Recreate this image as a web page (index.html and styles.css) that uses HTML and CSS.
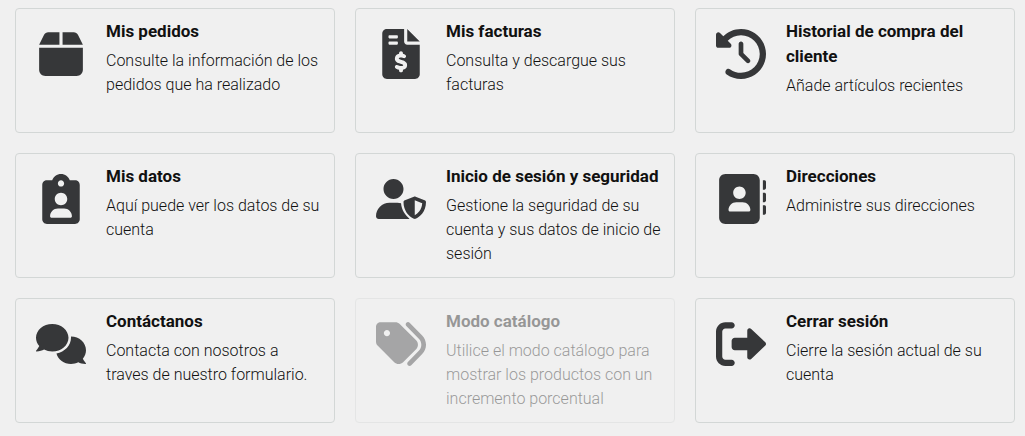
FILE: index.html
```html
<!DOCTYPE html>
<html lang="es">
	<head>
		<meta charset="UTF-8" />
		<meta name="viewport" content="width=device-width, initial-scale=1.0" />
		<title>Mi cuenta</title>
		<link rel="stylesheet" href="styles.css">
	</head>
	<body>
		<main class="account-grid">
			<a class="card" href="#pedidos">
				<svg class="card-icon" viewBox="0 0 448 512" aria-hidden="true"><path d="M50.73 58.53C58.86 42.27 75.48 32 93.67 32H208V160H0L50.73 58.53zM240 160V32H354.3C372.5 32 389.1 42.27 397.3 58.53L448 160H240zM448 416C448 451.3 419.3 480 384 480H64C28.65 480 0 451.3 0 416V192H448V416z"/></svg>
				<div class="card-body">
					<h2 class="card-title">Mis pedidos</h2>
					<p class="card-text">Consulte la información de los pedidos que ha realizado</p>
				</div>
			</a>

			<a class="card" href="#facturas">
				<svg class="card-icon" viewBox="0 0 384 512" aria-hidden="true"><path fill-rule="evenodd" d="M384 128h-128V0L384 128zM256 160H384v304c0 26.51-21.49 48-48 48h-288C21.49 512 0 490.5 0 464v-416C0 21.49 21.49 0 48 0H224l.0039 128C224 145.7 238.3 160 256 160zM64 88C64 92.38 67.63 96 72 96h80C156.4 96 160 92.38 160 88v-16C160 67.63 156.4 64 152 64h-80C67.63 64 64 67.63 64 72V88zM72 160h80C156.4 160 160 156.4 160 152v-16C160 131.6 156.4 128 152 128h-80C67.63 128 64 131.6 64 136v16C64 156.4 67.63 160 72 160zM197.5 316.8L191.1 315.2C168.3 308.2 168.8 304.1 169.6 300.5c1.375-7.812 16.59-9.719 30.27-7.625c5.594 .8438 11.73 2.812 17.59 4.844c10.39 3.594 21.83-1.938 25.45-12.34c3.625-10.44-1.891-21.84-12.33-25.47c-7.219-2.484-13.11-4.078-18.56-5.273V248c0-11.03-8.953-20-20-20s-20 8.969-20 20v5.992C149.6 258.8 133.8 272.8 130.2 293.7c-7.406 42.84 33.19 54.75 50.52 59.84l5.812 1.688c29.28 8.375 28.8 11.19 27.92 16.28c-1.375 7.812-16.59 9.75-30.31 7.625c-6.938-1.031-15.81-4.219-23.66-7.031l-4.469-1.625c-10.41-3.594-21.83 1.812-25.52 12.22c-3.672 10.41 1.781 21.84 12.2 25.53l4.266 1.5c7.758 2.789 16.38 5.59 25.06 7.512V424c0 11.03 8.953 20 20 20s20-8.969 20-20v-6.254c22.36-4.793 38.21-18.53 41.83-39.43C261.3 335 219.8 323.1 197.5 316.8z"/></svg>
				<div class="card-body">
					<h2 class="card-title">Mis facturas</h2>
					<p class="card-text">Consulta y descargue sus facturas</p>
				</div>
			</a>

			<a class="card" href="#historial">
				<svg class="card-icon" viewBox="0 0 512 512" aria-hidden="true"><path d="M256 0C397.4 0 512 114.6 512 256C512 397.4 397.4 512 256 512C201.7 512 151.2 495 109.7 466.1C95.2 455.1 91.64 436 101.8 421.5C111.9 407 131.8 403.5 146.3 413.6C177.4 435.3 215.2 448 256 448C362 448 448 362 448 256C448 149.1 362 64 256 64C202.1 64 155 85.46 120.2 120.2L151 151C166.1 166.1 155.4 192 134.1 192H24C10.75 192 0 181.3 0 168V57.94C0 36.56 25.85 25.85 40.97 40.97L74.98 74.98C121.3 28.69 185.3 0 255.1 0L256 0zM256 128C269.3 128 280 138.7 280 152V246.1L344.1 311C354.3 320.4 354.3 335.6 344.1 344.1C335.6 354.3 320.4 354.3 311 344.1L239 272.1C234.5 268.5 232 262.4 232 256V152C232 138.7 242.7 128 256 128V128z"/></svg>
				<div class="card-body">
					<h2 class="card-title">Historial de compra del cliente</h2>
					<p class="card-text">Añade artículos recientes</p>
				</div>
			</a>

			<a class="card" href="#datos">
				<svg class="card-icon" viewBox="0 0 384 512" aria-hidden="true"><path fill-rule="evenodd" d="M336 64h-53.88C268.9 26.8 233.7 0 192 0S115.1 26.8 101.9 64H48C21.5 64 0 85.48 0 112v352C0 490.5 21.5 512 48 512h288c26.5 0 48-21.48 48-48v-352C384 85.48 362.5 64 336 64zM192 64c17.67 0 32 14.33 32 32s-14.33 32-32 32S160 113.7 160 96S174.3 64 192 64zM192 192c35.35 0 64 28.65 64 64s-28.65 64-64 64S128 291.3 128 256S156.7 192 192 192zM288 448H96c-8.836 0-16-7.164-16-16C80 387.8 115.8 352 160 352h64c44.18 0 80 35.82 80 80C304 440.8 296.8 448 288 448z"/></svg>
				<div class="card-body">
					<h2 class="card-title">Mis datos</h2>
					<p class="card-text">Aquí puede ver los datos de su cuenta</p>
				</div>
			</a>

			<a class="card" href="#seguridad">
				<svg class="card-icon" viewBox="0 0 640 512" aria-hidden="true"><path fill-rule="evenodd" d="M622.3 271.1l-115.1-45.01c-4.125-1.629-12.62-3.754-22.25 0L369.8 271.1C359 275.2 352 285.1 352 295.1c0 111.6 68.75 188.8 132.9 213.9c9.625 3.75 18 1.625 22.25 0C558.4 489.9 640 420.5 640 295.1C640 285.1 633 275.2 622.3 271.1zM496 462.4V273.2l95.5 37.38C585.9 397.8 530.6 446 496 462.4zM224 256c70.7 0 128-57.31 128-128S294.7 0 224 0C153.3 0 96 57.31 96 128S153.3 256 224 256zM320.6 310.3C305.9 306.3 290.6 304 274.7 304H173.3C77.61 304 0 381.7 0 477.4C0 496.5 15.52 512 34.66 512H413.3c5.727 0 10.9-1.727 15.66-4.188C375.1 464.7 327.1 396 320.6 310.3z"/></svg>
				<div class="card-body">
					<h2 class="card-title">Inicio de sesión y seguridad</h2>
					<p class="card-text">Gestione la seguridad de su cuenta y sus datos de inicio de sesión</p>
				</div>
			</a>

			<a class="card" href="#direcciones">
				<svg class="card-icon" viewBox="0 0 512 512" aria-hidden="true"><path fill-rule="evenodd" d="M384 0H96C60.65 0 32 28.65 32 64v384c0 35.35 28.65 64 64 64h288c35.35 0 64-28.65 64-64V64C448 28.65 419.3 0 384 0zM240 128c35.35 0 64 28.65 64 64s-28.65 64-64 64c-35.34 0-64-28.65-64-64S204.7 128 240 128zM336 384h-192C135.2 384 128 376.8 128 368C128 323.8 163.8 288 208 288h64c44.18 0 80 35.82 80 80C352 376.8 344.8 384 336 384zM496 64H480v96h16C504.8 160 512 152.8 512 144v-64C512 71.16 504.8 64 496 64zM496 192H480v96h16C504.8 288 512 280.8 512 272v-64C512 199.2 504.8 192 496 192zM496 320H480v96h16c8.836 0 16-7.164 16-16v-64C512 327.2 504.8 320 496 320z"/></svg>
				<div class="card-body">
					<h2 class="card-title">Direcciones</h2>
					<p class="card-text">Administre sus direcciones</p>
				</div>
			</a>

			<a class="card" href="#contacto">
				<svg class="card-icon" viewBox="0 0 640 512" aria-hidden="true"><path d="M416 176C416 78.8 322.9 0 208 0S0 78.8 0 176c0 39.57 15.62 75.96 41.67 105.4c-16.39 32.76-39.23 57.32-39.59 57.68c-2.1 2.205-2.67 5.475-1.441 8.354C1.9 350.3 4.602 352 7.66 352c38.35 0 70.76-11.12 95.74-24.04C134.2 343.1 169.8 352 208 352C322.9 352 416 273.2 416 176zM599.6 443.7C624.8 413.9 640 376.6 640 336C640 238.8 554 160 448 160c-.3145 0-.6191 .041-.9336 .043C447.5 165.3 448 170.6 448 176c0 98.62-79.68 181.2-186.1 202.5C282.7 455.1 357.1 512 448 512c33.69 0 65.32-8.008 92.85-21.98C565.2 502 596.1 512 632.3 512c3.059 0 5.76-1.725 7.02-4.605c1.229-2.879 .6582-6.148-1.441-8.354C637.6 498.7 615.9 475.3 599.6 443.7z"/></svg>
				<div class="card-body">
					<h2 class="card-title">Contáctanos</h2>
					<p class="card-text">Contacta con nosotros a traves de nuestro formulario.</p>
				</div>
			</a>

			<a class="card card-disabled" href="#catalogo" aria-disabled="true">
				<svg class="card-icon" viewBox="0 0 512 512" aria-hidden="true"><path fill-rule="evenodd" d="M472.8 168.4C525.1 221.4 525.1 306.6 472.8 359.6L360.8 472.9C351.5 482.3 336.3 482.4 326.9 473.1C317.4 463.8 317.4 448.6 326.7 439.1L438.6 325.9C472.5 291.6 472.5 236.4 438.6 202.1L310.9 72.87C301.5 63.44 301.6 48.25 311.1 38.93C320.5 29.61 335.7 29.7 344.1 39.13L472.8 168.4zM0 229.5V80C0 53.49 21.49 32 48 32H197.5C214.5 32 230.7 38.74 242.7 50.75L410.7 218.7C435.7 243.7 435.7 284.3 410.7 309.3L277.3 442.7C252.3 467.7 211.7 467.7 186.7 442.7L18.75 274.7C6.743 262.7 0 246.5 0 229.5zM112 112C94.33 112 80 126.3 80 144C80 161.7 94.33 176 112 176C129.7 176 144 161.7 144 144C144 126.3 129.7 112 112 112z"/></svg>
				<div class="card-body">
					<h2 class="card-title">Modo catálogo</h2>
					<p class="card-text">Utilice el modo catálogo para mostrar los productos con un incremento porcentual</p>
				</div>
			</a>

			<a class="card" href="#salir">
				<svg class="card-icon" viewBox="0 0 512 512" aria-hidden="true"><path d="M96 480h64C177.7 480 192 465.7 192 448S177.7 416 160 416H96c-17.67 0-32-14.33-32-32V128c0-17.67 14.33-32 32-32h64C177.7 96 192 81.67 192 64S177.7 32 160 32H96C42.98 32 0 74.98 0 128v256C0 437 42.98 480 96 480zM504.8 238.5l-144.1-136c-6.975-6.578-17.2-8.375-26-4.594c-8.803 3.797-14.51 12.47-14.51 22.05l-.0918 72l-128-.001c-17.69 0-32.02 14.33-32.02 32v64c0 17.67 14.34 32 32.02 32l128 .001l.0918 71.1c0 9.578 5.707 18.25 14.51 22.05c8.803 3.781 19.03 1.984 26-4.594l144.1-136C514.4 264.4 514.4 247.6 504.8 238.5z"/></svg>
				<div class="card-body">
					<h2 class="card-title">Cerrar sesión</h2>
					<p class="card-text">Cierre la sesión actual de su cuenta</p>
				</div>
			</a>
		</main>
	</body>
</html>
```

FILE: styles.css
```css
* {
	box-sizing: border-box;
}
body {
	margin: 0;
	padding: 8px 10px 13px 15px;
	font-family: Roboto, sans-serif;
	font-size: 16px;
	color: #111;
	background-color: #f0f0f0;
}
.account-grid {
	display: grid;
	grid-template-columns: repeat(3, 1fr);
	grid-auto-rows: 1fr;
	gap: 20px;
}
.card {
	display: flex;
	align-items: flex-start;
	gap: 20px;
	padding: 10px 10px 11px 20px;
	border: 1px solid #d3d7d6;
	border-radius: 4px;
	color: inherit;
	text-decoration: none;
}
.card:hover {
	border-color: #999;
}
.card-icon {
	flex: none;
	width: 50px;
	height: 50px;
	margin-top: 10px;
	fill: #363739;
}
.card-body {
	flex: 1;
	min-width: 0;
}
.card-title {
	margin: 0 0 5px;
	font-size: 17px;
	font-weight: 700;
	line-height: 25px;
}
.card-text {
	margin: 0;
	font-weight: 300;
	line-height: 24px;
}
.card-disabled {
	opacity: 0.4;
	pointer-events: none;
}
```
